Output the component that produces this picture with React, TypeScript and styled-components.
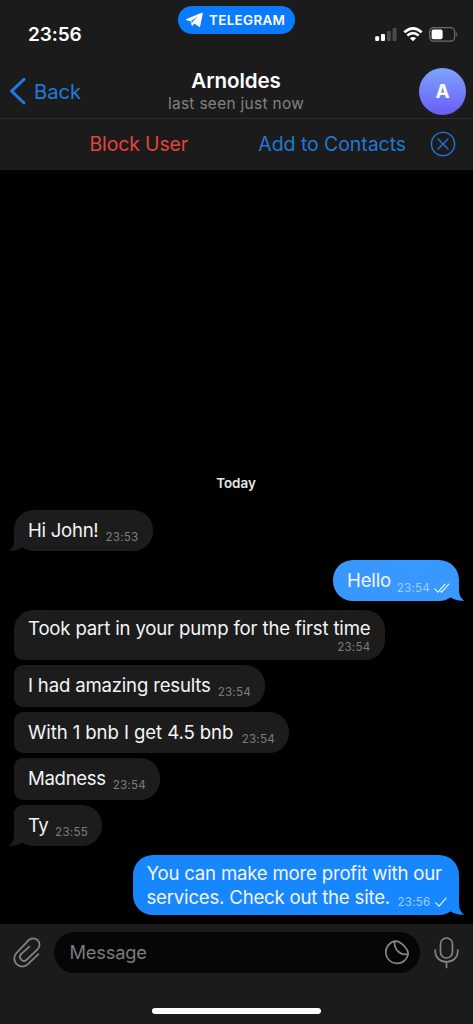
import React from 'react';
import styled, { createGlobalStyle } from 'styled-components';

const GlobalStyle = createGlobalStyle`
  * { box-sizing: border-box; }
  body { margin: 0; background: #000; }
  svg { flex: none; }
`;

const Screen = styled.div`
  display: flex;
  flex-direction: column;
  width: 473px;
  height: 1024px;
  overflow: hidden;
  background: #000;
  color: #fff;
  font-family: Inter, 'Liberation Sans', sans-serif;
  white-space: nowrap;
`;

const Header = styled.header`
  flex: none;
  height: 170px;
  background: #1b1b1c;
`;

const StatusBar = styled.div`
  display: grid;
  grid-template-columns: 1fr 117px 1fr;
  height: 64px;
  padding: 6px 14px 0 28px;
`;

const Clock = styled.div`
  padding-top: 17px;
  font-size: 19px;
  font-weight: 600;
  line-height: 24px;
  letter-spacing: -0.1px;
`;

const AppPill = styled.div`
  display: flex;
  align-items: center;
  gap: 5px;
  width: 117px;
  height: 28px;
  margin-left: -7px;
  padding-left: 7px;
  border-radius: 14px;
  background: #0a7aff;
  font-size: 13.4px;
  font-weight: 600;
  letter-spacing: 0.35px;
`;

const StatusIcons = styled.div`
  display: flex;
  justify-content: flex-end;
  align-items: flex-start;
  gap: 6px;
  padding-top: 20px;
`;

const NavBar = styled.div`
  display: grid;
  grid-template-columns: 1fr 160px 1fr;
  height: 55px;
  padding: 0 7px 0 9px;
  border-bottom: 1px solid #2b2b2d;
`;

const BackButton = styled.div`
  display: flex;
  align-items: center;
  gap: 8px;
  height: 54px;
  color: #1d7bdc;
  font-size: 20.2px;
`;

const Title = styled.div`
  text-align: center;
  padding-top: 4px;
  margin-left: -3px;
`;

const Name = styled.div`
  font-size: 20.6px;
  font-weight: 600;
  line-height: 26px;
  letter-spacing: -0.1px;
`;

const LastSeen = styled.div`
  color: #828284;
  font-size: 15.4px;
  line-height: 19px;
  letter-spacing: 0.33px;
`;

const Avatar = styled.div`
  display: grid;
  place-items: center;
  justify-self: end;
  width: 47px;
  height: 47px;
  margin-top: 4px;
  border-radius: 50%;
  background: linear-gradient(#7ca5fb, #6a5cf8);
  font-size: 19px;
  font-weight: 700;
`;

const ActionBar = styled.div`
  display: flex;
  align-items: center;
  height: 50px;
  padding: 0 17px 0 89.5px;
  font-size: 19.5px;
`;

const BlockAction = styled.div`
  flex: 1;
  color: #e2453e;
  letter-spacing: -0.15px;
`;

const AddAction = styled.div`
  color: #2178d0;
  margin-right: 24px;
  letter-spacing: -0.07px;
`;

const Chat = styled.main`
  display: flex;
  flex: 1;
  flex-direction: column;
  justify-content: flex-end;
  padding: 0 14px 9px;
`;

const DayLabel = styled.div`
  align-self: center;
  margin: 0 1px 17.5px 0;
  font-size: 13.4px;
  font-weight: 600;
  line-height: 18px;
  color: #e8e8e8;
`;

type BubbleProps = {
  $out?: boolean;
  $width: number;
  $height: number;
  $gap: number;
  $fill: string;
  $radius: string;
  $stacked?: boolean;
  $padRight: number;
};

const Bubble = styled.div<BubbleProps>`
  position: relative;
  display: flex;
  align-self: ${p => (p.$out ? 'flex-end' : 'flex-start')};
  flex-direction: ${p => (p.$stacked ? 'column' : 'row')};
  justify-content: ${p => (p.$stacked ? 'flex-start' : 'space-between')};
  width: ${p => p.$width}px;
  height: ${p => p.$height}px;
  margin-top: ${p => p.$gap}px;
  padding: ${p => (p.$height > 45 ? 6 : 8)}px ${p => p.$padRight}px 0 14px;
  border-radius: ${p => p.$radius};
  background: ${p => p.$fill};
`;

const Words = styled.div<{ $track: number; $wide: boolean }>`
  align-self: flex-start;
  margin-right: ${p => (p.$wide ? -60 : 0)}px;
  font-size: 18.6px;
  line-height: 24px;
  letter-spacing: ${p => p.$track}px;
  color: #f4f4f4;
`;

const Stamp = styled.div<{ $out?: boolean; $stacked?: boolean }>`
  display: flex;
  align-items: center;
  align-self: flex-end;
  gap: 4px;
  height: 14px;
  margin-bottom: ${p => (p.$stacked ? 0 : p.$out ? 6 : 7.5)}px;
  font-size: 11.6px;
  line-height: 14px;
  letter-spacing: 0.25px;
  color: ${p => (p.$out ? '#9fceff' : '#7c7c7e')};
`;

const Tail = styled.svg<{ $out?: boolean }>`
  position: absolute;
  bottom: 0;
  ${p => (p.$out ? 'right: -6px;' : 'left: -6px; transform: scaleX(-1);')}
`;

const Footer = styled.footer`
  display: flex;
  flex: none;
  flex-direction: column;
  justify-content: space-between;
  align-items: center;
  height: 100px;
  padding: 8px 14px 10px 13px;
  background: #1b1b1c;
`;

const Composer = styled.div`
  display: flex;
  align-items: center;
  width: 100%;
  height: 41px;
`;

const Field = styled.div`
  display: flex;
  flex: 1;
  align-items: center;
  justify-content: space-between;
  height: 41px;
  margin: 0 14px 0 13px;
  padding: 0 10px 2px 15.5px;
  border-radius: 21px;
  background: #060606;
  color: #7b7b7d;
  font-size: 18.3px;
  letter-spacing: -0.2px;
`;

const HomeIndicator = styled.div`
  width: 169px;
  height: 6px;
  border-radius: 3px;
  background: #fff;
`;

const Ticks = ({ double }: { double?: boolean }) => (
  <svg width={double ? 16 : 12} height="11" viewBox={double ? '0 0 16 11' : '0 0 12 11'} fill="none" stroke="#e3f3ff" strokeWidth="1.2" strokeLinecap="round" strokeLinejoin="round">
    <path d="M0.8 5.8 L4 9.2 L11 1.1" />
    {double && <path d="M6.9 8.5 L7.7 9.2 L14.8 1.1" />}
  </svg>
);

type Message = {
  lines: string[];
  time: string;
  width: number;
  height: number;
  gap: number;
  radius: string;
  track: number;
  fill?: string;
  out?: boolean;
  tail?: boolean;
  stacked?: boolean;
  read?: boolean;
};

const messages: Message[] = [
  { lines: ['Hi John!'], time: '23:53', width: 138.5, height: 41.5, gap: 0, radius: '20px', track: -0.28, tail: true },
  { lines: ['Hello'], time: '23:54', width: 126, height: 41.5, gap: 8.5, radius: '20px', track: -0.15, fill: '#3898ff', out: true, tail: true, read: true },
  { lines: ['Took part in your pump for the first time'], time: '23:54', width: 370.5, height: 50, gap: 8.5, radius: '20px 20px 20px 9px', track: -0.17, stacked: true },
  { lines: ['I had amazing results'], time: '23:54', width: 251, height: 41.5, gap: 5.5, radius: '9px 20px 20px 9px', track: -0.19 },
  { lines: ['With 1 bnb I get 4.5 bnb'], time: '23:54', width: 275, height: 41.5, gap: 5, radius: '9px 20px 20px 9px', track: -0.09 },
  { lines: ['Madness'], time: '23:54', width: 146, height: 41.5, gap: 5, radius: '9px 20px 20px 9px', track: -0.33 },
  { lines: ['Ty'], time: '23:55', width: 88, height: 41.5, gap: 5, radius: '9px 20px 20px 20px', track: -0.5, tail: true },
  { lines: ['You can make more profit with our', 'services. Check out the site.'], time: '23:56', width: 326.5, height: 60.5, gap: 8.5, radius: '20px', track: -0.2, fill: '#1787ff', out: true, tail: true },
];

const MessageBubble = ({ m }: { m: Message }) => {
  const fill = m.fill ?? '#1c1c1d';
  const padRight = m.read ? 9 : m.out ? 12.5 : 14;
  return (
    <Bubble $out={m.out} $width={m.width} $height={m.height} $gap={m.gap} $fill={fill} $radius={m.radius} $stacked={m.stacked} $padRight={padRight}>
      <Words $track={m.track} $wide={m.lines.length > 1}>
        {m.lines.map(line => <div key={line}>{line}</div>)}
      </Words>
      <Stamp $out={m.out} $stacked={m.stacked}>
        {m.time}
        {m.out && <Ticks double={m.read} />}
      </Stamp>
      {m.tail && (
        <Tail $out={m.out} width="22" height="22" viewBox="0 0 22 22">
          <path d="M16 4 V11 C16 16 18 19.6 21.2 21.7 C15.5 22 11 21 7.5 18.3 L2 16 L4 8 Z" fill={fill} />
        </Tail>
      )}
    </Bubble>
  );
};

const App = () => (
  <>
    <GlobalStyle />
    <Screen>
      <Header>
        <StatusBar>
          <Clock>23:56</Clock>
          <AppPill>
            <svg width="19" height="16" viewBox="0 0 19 16">
              <path d="M1 7.2 L16.6 0.7 Q18 0.4 17.7 1.9 L15.2 14 Q14.8 15.4 13.5 14.6 L9.6 11.6 L7.6 13.6 Q6.7 14.2 6.5 13 L5.5 9.2 L1 7.9 Q0.1 7.5 1 7.2 Z" fill="#fff" />
              <path d="M6.2 9.1 L13 4.6 L7.5 9.8 L7 12 Z" fill="#0a7aff" />
            </svg>
            TELEGRAM
          </AppPill>
          <StatusIcons>
            <svg width="22" height="16" viewBox="0 0 22 16">
              <rect x="0.2" y="10.3" width="4" height="4.7" rx="1" fill="#fff" />
              <rect x="6" y="8" width="4" height="7" rx="1" fill="#fff" />
              <rect x="11.9" y="5" width="4" height="10" rx="1" fill="#4b4b4d" />
              <rect x="17.6" y="2" width="4" height="13" rx="1" fill="#4b4b4d" />
            </svg>
            <svg width="20" height="16" viewBox="0 0 20 16" fill="none" stroke="#fff" strokeWidth="2.6">
              <path d="M1.3 6.3 Q10 -1.5 18.7 6.3" />
              <path d="M4.3 9.6 Q10 4.8 15.7 9.6" />
              <path d="M6.9 12.2 Q10 9.6 13.1 12.2 L10 15.2 Z" fill="#fff" stroke="none" />
            </svg>
            <svg width="30" height="16" viewBox="0 0 30 16">
              <rect x="0.7" y="1.7" width="25" height="13.4" rx="4" fill="none" stroke="#6d6d6f" strokeWidth="1.3" />
              <rect x="2.6" y="3.6" width="11" height="9.6" rx="1.8" fill="#fff" />
              <path d="M27.3 6 Q29.6 8.4 27.3 10.8 Z" fill="#6d6d6f" />
            </svg>
          </StatusIcons>
        </StatusBar>
        <NavBar>
          <BackButton>
            <svg width="17" height="28" viewBox="0 0 17 28" fill="none" stroke="#1d7bdc" strokeWidth="3" strokeLinecap="round" strokeLinejoin="round">
              <path d="M15 2.3 L2.6 14.2 L15 26" />
            </svg>
            Back
          </BackButton>
          <Title>
            <Name>Arnoldes</Name>
            <LastSeen>last seen just now</LastSeen>
          </Title>
          <Avatar>A</Avatar>
        </NavBar>
        <ActionBar>
          <BlockAction>Block User</BlockAction>
          <AddAction>Add to Contacts</AddAction>
          <svg width="26" height="26" viewBox="0 0 26 26" fill="none" stroke="#2178d0" strokeWidth="1.4" strokeLinecap="round">
            <circle cx="13" cy="13" r="11.6" />
            <path d="M8 8 L18 18 M18 8 L8 18" />
          </svg>
        </ActionBar>
      </Header>
      <Chat>
        <DayLabel>Today</DayLabel>
        {messages.map(m => <MessageBubble key={m.lines[0]} m={m} />)}
      </Chat>
      <Footer>
        <Composer>
          <svg width="28" height="32" viewBox="0 0 28 32" fill="none" stroke="#828284" strokeWidth="1.8" strokeLinecap="round" strokeLinejoin="round">
            <path d="M25.4 17.2 L15 27.2 A8 8 0 0 1 3.6 15.8 L15.7 3.2 A6.3 6.3 0 0 1 24.7 12.1 L13.4 23 A4 4 0 0 1 7.8 17.4 L16.3 9.6" />
          </svg>
          <Field>
            Message
            <svg width="26" height="26" viewBox="0 0 26 26" fill="none" stroke="#858587" strokeWidth="1.7" strokeLinejoin="round">
              <path d="M10.8 2.1 A11.3 11.3 0 1 0 24.2 15.2 C24.3 9.5 16 1.6 10.8 2.1 Z" />
              <path d="M10.8 2.1 C9.6 9.8 15.5 16.8 24.2 15.2" />
            </svg>
          </Field>
          <svg width="25" height="32" viewBox="0 0 25 32" fill="none" stroke="#858587" strokeWidth="1.7" strokeLinecap="round">
            <rect x="6.5" y="1" width="12" height="20" rx="6" />
            <path d="M1.2 13 V14 C1.2 20.5 6 24.8 12.5 24.8 C19 24.8 23.8 20.5 23.8 14 V13 M12.5 24.8 V30.5" />
          </svg>
        </Composer>
        <HomeIndicator />
      </Footer>
    </Screen>
  </>
);

export default App;
